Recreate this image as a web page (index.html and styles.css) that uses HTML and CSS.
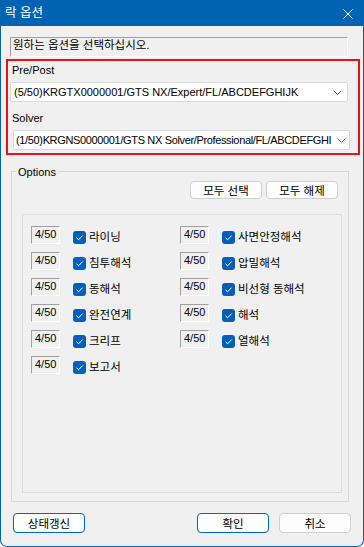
FILE: index.html
```html
<!DOCTYPE html>
<html lang="ko">
<head>
  <meta charset="UTF-8" />
  <title>락 옵션</title>
  <link rel="stylesheet" href="styles.css">
</head>
<body>
  <div class="window">
    <div class="titlebar">
      <span class="title">락 옵션</span>
      <svg class="close" width="10" height="10" viewBox="0 0 10 10">
        <path d="M0.5 0.5 L9.5 9.5 M9.5 0.5 L0.5 9.5" stroke="#fff" stroke-width="1" fill="none"/>
      </svg>
    </div>

    <div class="prompt ko">원하는 옵션을 선택하십시오.</div>

    <div class="license-frame">
      <div class="field-label">Pre/Post</div>
      <div class="combo">
        <span class="combo-text">(5/50)KRGTX0000001/GTS NX/Expert/FL/ABCDEFGHIJK</span>
        <svg class="chevron" width="9" height="5" viewBox="0 0 9 5"><path d="M0.5 0.5 L4.5 4.5 L8.5 0.5" stroke="#606060" fill="none"/></svg>
      </div>
      <div class="field-label solver-label">Solver</div>
      <div class="combo combo-solver">
        <span class="combo-text">(1/50)KRGNS0000001/GTS NX Solver/Professional/FL/ABCDEFGHIJ</span>
        <svg class="chevron" width="9" height="5" viewBox="0 0 9 5"><path d="M0.5 0.5 L4.5 4.5 L8.5 0.5" stroke="#606060" fill="none"/></svg>
      </div>
    </div>

    <div class="group">
      <span class="group-title">Options</span>
      <div class="group-actions">
        <button class="btn ko">모두 선택</button>
        <button class="btn ko">모두 해제</button>
      </div>
      <div class="option-panel">
        <div class="option"><span class="count">4/50</span><span class="check"></span><span class="name ko">라이닝</span></div>
        <div class="option"><span class="count">4/50</span><span class="check"></span><span class="name ko">사면안정해석</span></div>
        <div class="option"><span class="count">4/50</span><span class="check"></span><span class="name ko">침투해석</span></div>
        <div class="option"><span class="count">4/50</span><span class="check"></span><span class="name ko">압밀해석</span></div>
        <div class="option"><span class="count">4/50</span><span class="check"></span><span class="name ko">동해석</span></div>
        <div class="option"><span class="count">4/50</span><span class="check"></span><span class="name ko">비선형 동해석</span></div>
        <div class="option"><span class="count">4/50</span><span class="check"></span><span class="name ko">완전연계</span></div>
        <div class="option"><span class="count">4/50</span><span class="check"></span><span class="name ko">해석</span></div>
        <div class="option"><span class="count">4/50</span><span class="check"></span><span class="name ko">크리프</span></div>
        <div class="option"><span class="count">4/50</span><span class="check"></span><span class="name ko">열해석</span></div>
        <div class="option"><span class="count">4/50</span><span class="check"></span><span class="name ko">보고서</span></div>
      </div>
    </div>

    <div class="footer-buttons">
      <button class="btn btn-wide btn-focus ko">상태갱신</button>
      <button class="btn btn-wide btn-focus btn-ok ko">확인</button>
      <button class="btn btn-wide ko">취소</button>
    </div>
  </div>
</body>
</html>
```

FILE: styles.css
```css
* {
  margin: 0;
  padding: 0;
  box-sizing: border-box;
}

body {
  font-family: 'Liberation Sans', 'Noto Sans CJK KR', sans-serif;
  font-size: 11px;
  color: #000;
  background: #fff;
}

.ko {
  font-size: 11.5px;
}

.window {
  width: 364px;
  height: 547px;
  background: #f0f0f0;
  border: 1px solid #0063b1;
  border-top: none;
  border-radius: 0 0 7px 7px;
  overflow: hidden;
}

.titlebar {
  height: 26px;
  margin: 0 -1px;
  background: #0063b1;
  display: flex;
  align-items: center;
  justify-content: space-between;
  padding: 0 11px 0 5px;
}

.title {
  color: #fff;
  font-size: 12.5px;
  line-height: 26px;
}

.close {
  display: block;
  margin-top: 1px;
}

.prompt {
  margin: 11px 0 0 9px;
  width: 338px;
  height: 20px;
  border: 1px solid;
  border-color: #a0a0a0 #fff #fff #a0a0a0;
  padding: 0 0 0 2px;
  line-height: 14px;
}

.license-frame {
  margin: 2px 0 0 5px;
  width: 354px;
  height: 96px;
  border: 2px solid #ee1111;
  padding-top: 2px;
}

.field-label {
  margin-left: 4px;
  line-height: 14px;
}

.solver-label {
  margin-top: 9px;
}

.combo {
  margin: 5px 0 0 2px;
  width: 338px;
  height: 20px;
  background: #fff;
  border: 1px solid #dadada;
  border-radius: 2px;
  display: flex;
  align-items: center;
  padding: 0 5px 0 3px;
}

.combo-solver {
  margin-left: 5px;
  width: 337px;
  padding: 0 3px 0 2px;
}

.combo-text {
  flex: 1;
  overflow: hidden;
  white-space: nowrap;
  margin-right: 4px;
}

.combo-solver .combo-text {
  letter-spacing: -0.35px;
  margin-right: 6px;
}

.chevron {
  flex: none;
  display: block;
}

.group {
  margin: 16px 0 0 10px;
  width: 338px;
  height: 331px;
  border: 1px solid #d6d6d6;
}

.group-title {
  display: block;
  width: fit-content;
  margin: -7px 0 0 4px;
  padding: 0 2px;
  line-height: 14px;
  background: #f0f0f0;
}

.group-actions {
  display: flex;
  justify-content: flex-end;
  gap: 4px;
  padding-right: 10px;
  margin-top: 2px;
}

.btn {
  font-family: inherit;
  width: 72px;
  height: 18px;
  background: #fdfdfd;
  border: 1px solid #d0d0d0;
  border-radius: 4px;
  color: #000;
}

.btn-wide {
  height: 20px;
  width: 72px;
}

.btn-focus {
  border-color: #0067c0;
}

.option-panel {
  margin: 15px 0 0 10px;
  width: 320px;
  height: 279px;
  border: 1px solid #dcdcdc;
  padding: 11px 0 0 8px;
  display: grid;
  grid-template-columns: 149px auto;
  grid-auto-rows: 18px;
  row-gap: 8px;
  align-content: start;
}

.option {
  display: flex;
  align-items: center;
}

.count {
  width: 29px;
  height: 18px;
  border: 1px solid;
  border-color: #a0a0a0 #fff #fff #a0a0a0;
  padding: 1px 0 0 3px;
  line-height: 13px;
  margin-right: 13px;
}

.check {
  width: 13px;
  height: 13px;
  margin: 5px 3px 0 0;
  border-radius: 3px;
  background: #005fb8 url("data:image/svg+xml;utf8,<svg xmlns='http://www.w3.org/2000/svg' width='13' height='13'><path d='M3.5 6.8 L5.6 8.8 L9.6 4.6' stroke='white' stroke-width='1' fill='none'/></svg>") no-repeat;
}

.name {
  margin-top: 3px;
  line-height: 14px;
}

.footer-buttons {
  display: flex;
  gap: 10px;
  margin: 11px 0 0 12px;
  padding-right: 12px;
}

.btn-ok {
  margin-left: auto;
}
```
